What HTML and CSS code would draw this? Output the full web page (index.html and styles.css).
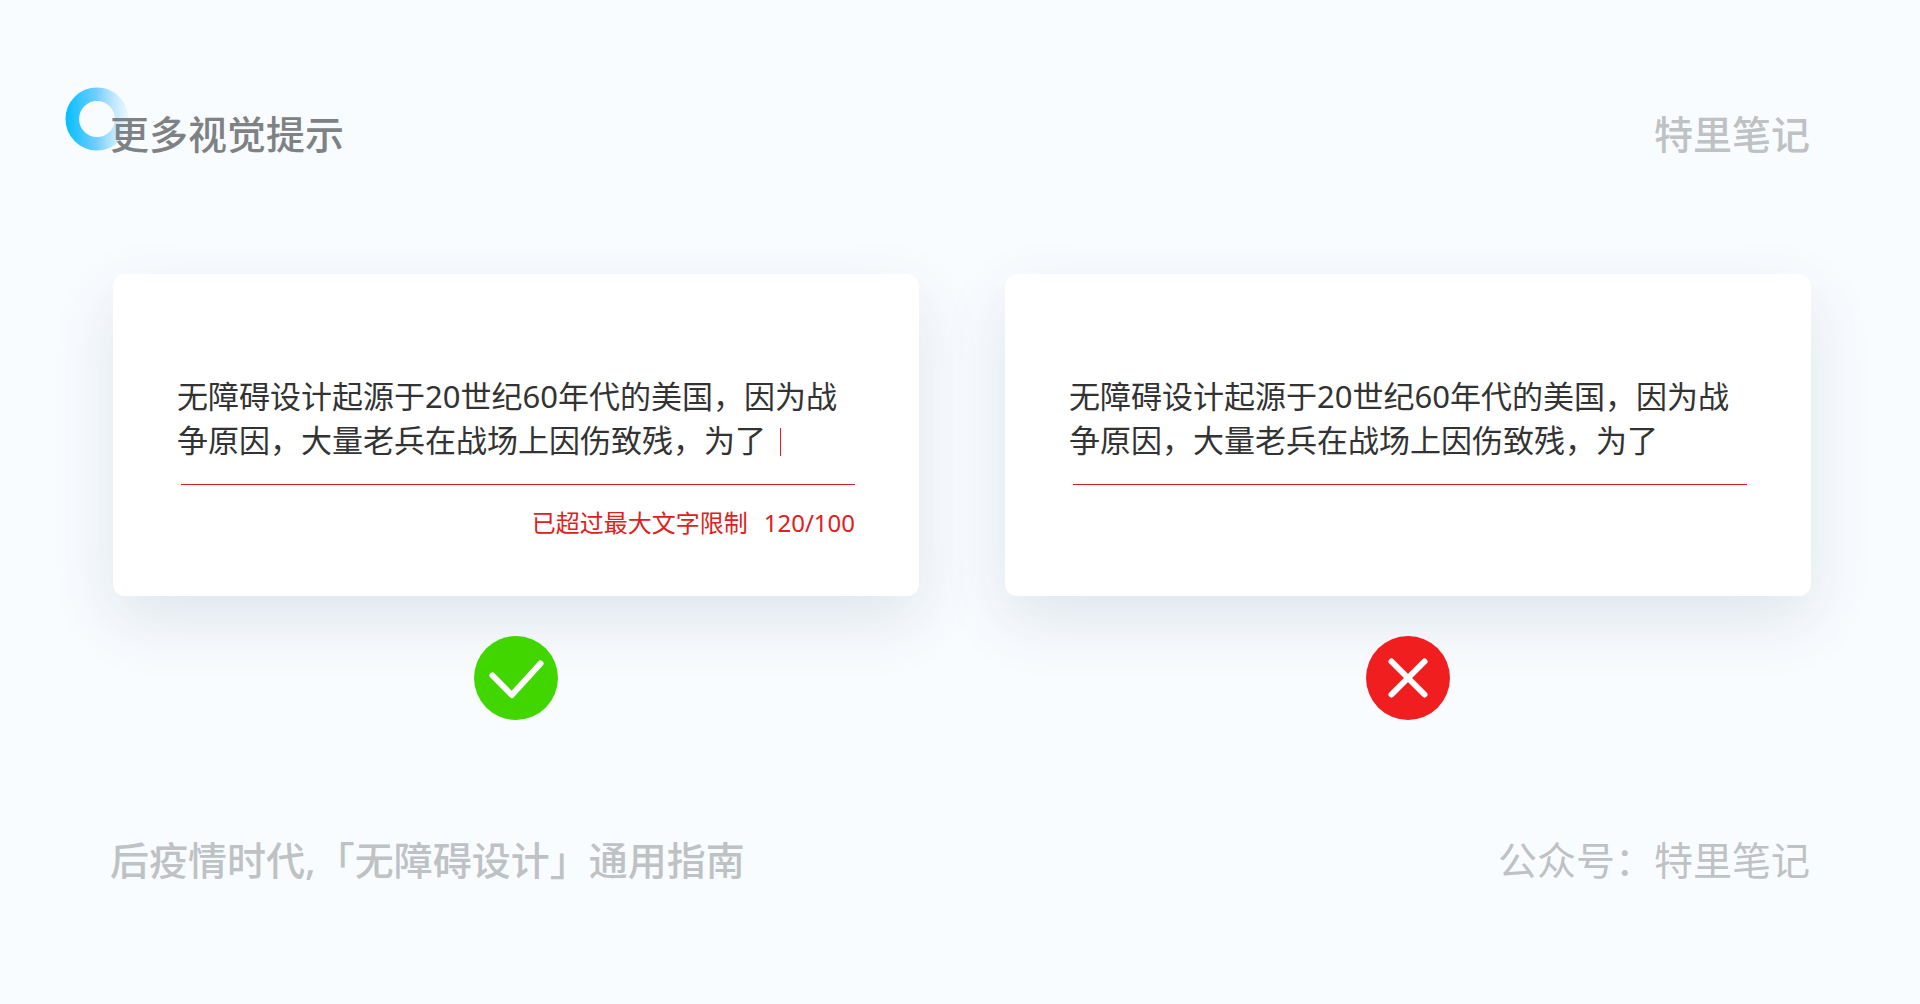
FILE: index.html
```html
<!DOCTYPE html>
<html lang="zh-CN">
<head>
    <meta charset="UTF-8">
    <meta name="viewport" content="width=device-width, initial-scale=1.0">
    <title>更多视觉提示</title>
    <link rel="stylesheet" href="styles.css">
</head>
<body>
    <header class="bar">
        <div class="title_box">
            <svg class="ring" viewBox="0 0 64 64" aria-hidden="true">
                <defs>
                    <linearGradient id="ring_color" x1="0" y1="0" x2="64" y2="0" gradientUnits="userSpaceOnUse">
                        <stop offset="0" stop-color="#00bfff"/>
                        <stop offset="0.5" stop-color="#74ceff"/>
                        <stop offset="1" stop-color="#e4f3ff" stop-opacity="0.6"/>
                    </linearGradient>
                </defs>
                <circle cx="32" cy="32" r="24.7" fill="none" stroke="url(#ring_color)" stroke-width="13.6"/>
            </svg>
            <h1 class="title">更多视觉提示</h1>
        </div>
        <p class="brand">特里笔记</p>
    </header>

    <main class="examples">
        <section class="example">
            <div class="card">
                <div class="field">
                    <textarea class="text" rows="2" aria-label="输入内容" aria-describedby="error">无障碍设计起源于20世纪60年代的美国，因为战争原因，大量老兵在战场上因伤致残，为了</textarea>
                    <span class="caret"></span>
                </div>
                <div class="line"></div>
                <p class="error" id="error">
                    <span>已超过最大文字限制</span>
                    <span>120/100</span>
                </p>
            </div>
            <svg class="mark" viewBox="0 0 84 84" role="img" aria-label="正确">
                <circle cx="42" cy="42" r="42" fill="#42d600"/>
                <path d="M18.5 39.5 L37.8 59 L66.5 27.5" fill="none" stroke="#fff" stroke-width="6" stroke-linecap="round" stroke-linejoin="round"/>
            </svg>
        </section>

        <section class="example">
            <div class="card">
                <div class="field">
                    <textarea class="text" rows="2" aria-label="输入内容">无障碍设计起源于20世纪60年代的美国，因为战争原因，大量老兵在战场上因伤致残，为了</textarea>
                </div>
                <div class="line"></div>
            </div>
            <svg class="mark" viewBox="0 0 84 84" role="img" aria-label="错误">
                <circle cx="42" cy="42" r="42" fill="#f01e1e"/>
                <path d="M25.5 25.5 L58.5 58.5 M58.5 25.5 L25.5 58.5" fill="none" stroke="#fff" stroke-width="6" stroke-linecap="round"/>
            </svg>
        </section>
    </main>

    <footer class="bar">
        <p class="topic">后疫情时代,「无障碍设计」通用指南</p>
        <p class="account">公众号：特里笔记</p>
    </footer>
</body>
</html>
```
FILE: styles.css
```css
* {margin: 0; padding: 0; box-sizing: border-box;}
body {
    padding: 105px 0;
    background-color: #f9fcff;
    font-family: "Noto Sans", "Noto Sans CJK SC", sans-serif;
    color: #333;
}

/* 页眉和页脚 */
.bar {
    display: flex; justify-content: space-between; align-items: center;
    padding: 0 110px;
    font-size: 39px; line-height: 58px;
    color: #bec2c5;
}
.title_box {position: relative;}
.title {position: relative; font-size: 39px; font-weight: 500; color: #7e8285;}
.ring {position: absolute; left: -45px; top: -18px; width: 64px; height: 64px;}
.brand, .topic {font-weight: 500;}

/* 对比示例 */
.examples {
    display: grid; grid-template-columns: 1fr 1fr; gap: 86px;
    margin: 111px 0;
    padding: 0 109px 0 113px;
}
.example {display: flex; flex-direction: column; align-items: center; gap: 40px;}
.card {
    width: 100%; min-height: 322px;
    padding: 100px 64px 50px;
    border-radius: 12px;
    background-color: #fff;
    box-shadow: 0 24px 64px rgba(30, 65, 90, 0.12);
}
.field {position: relative;}
.text {
    display: block; width: 100%; height: 88px;
    border: none; outline: none; resize: none; overflow: hidden;
    background: none;
    font-family: inherit; font-size: 31px; line-height: 44px; color: #333;
}
.caret {position: absolute; left: 603px; bottom: 6px; width: 1px; height: 28px; background-color: #e02020;}
.line {height: 1px; margin: 22px 0 0 4px; background-color: #e02020;}
.error {
    display: flex; justify-content: flex-end; gap: 16px;
    margin-top: 20px;
    font-size: 24px; line-height: 36px; color: #e02020;
}
.mark {width: 84px; height: 84px;}
```
